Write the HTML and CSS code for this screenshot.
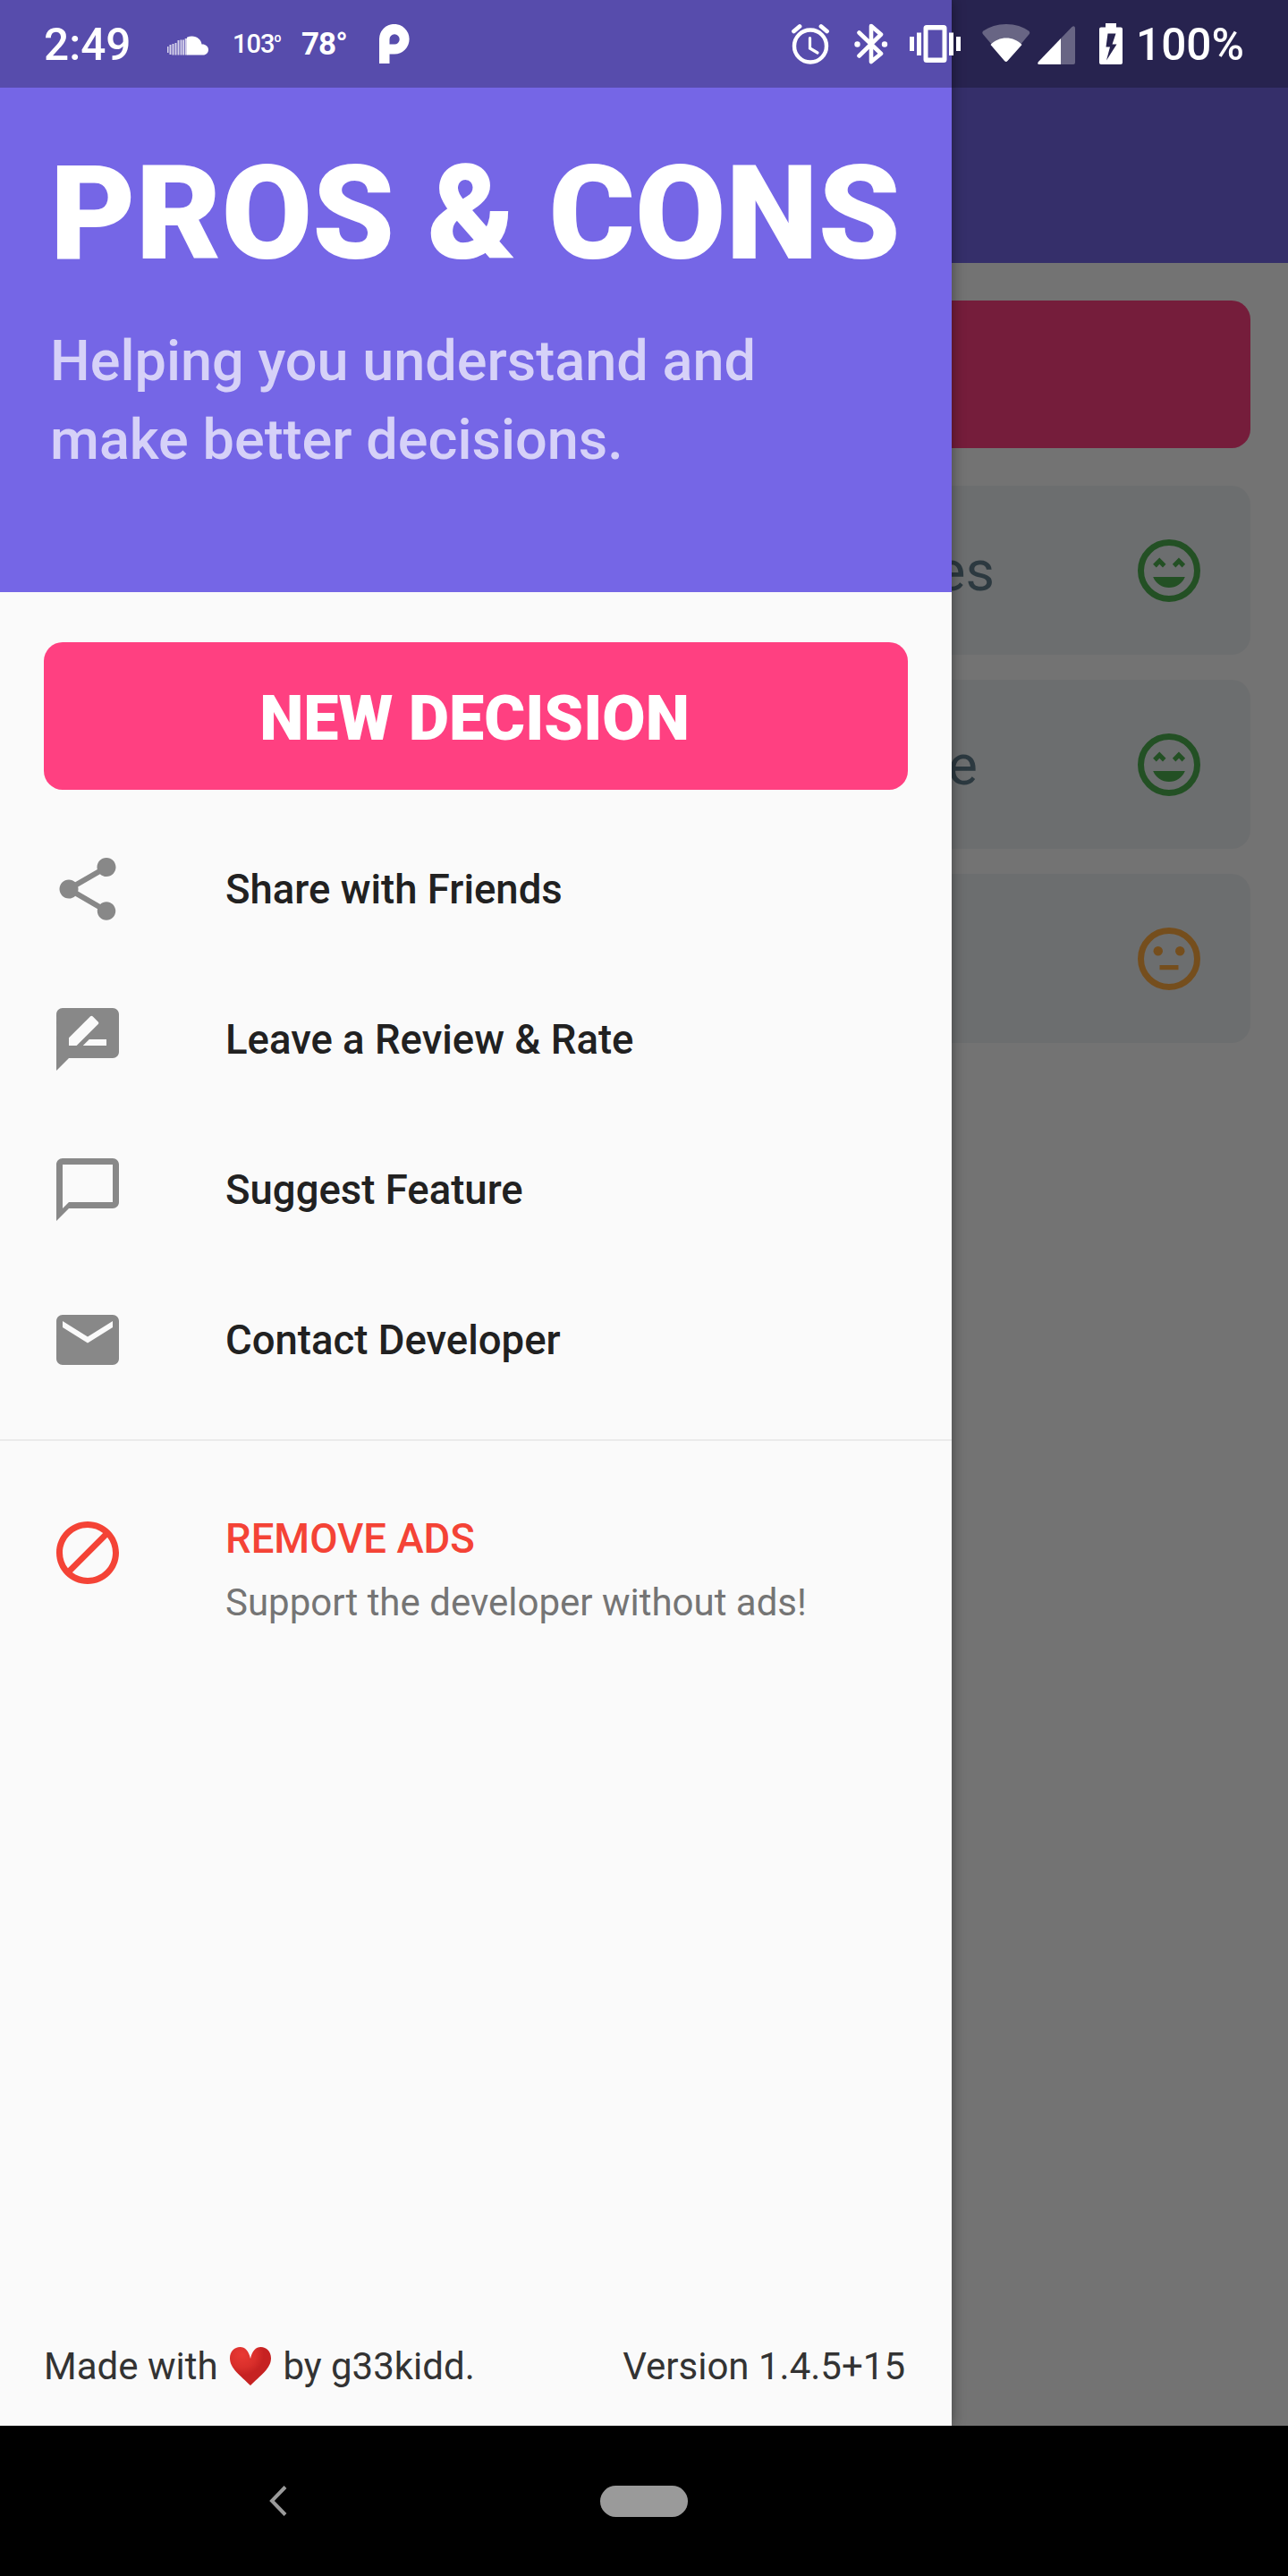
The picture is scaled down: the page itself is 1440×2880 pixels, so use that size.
FILE: index.html
```html
<!DOCTYPE html>
<html lang="en">
<head>
<meta charset="utf-8">
<title>Pros &amp; Cons</title>
<link rel="stylesheet" href="styles.css">
</head>
<body>
<div class="phone">
  <div class="app">
    <main class="screen">
      <div class="app-bar"></div>
      <div class="decisions">
        <div class="screen-button"></div>
        <div class="card"><span class="card-title card-title-long">es</span>
          <svg class="icon good" viewBox="0 0 24 24"><circle cx="12" cy="12" r="9" fill="none" stroke="currentColor" stroke-width="2"/><path d="M6.88 9.94l1.06 1.06L8.94 9.94 10 11l1-1.06L8.94 7.88zM13.1 9.94L14.1 11l1.06-1.06 1 1.06 1.02-1.06-2.06-2.06zM6.9 14a5.5 5.5 0 0 0 10.2 0z"/></svg></div>
        <div class="card"><span class="card-title">e</span>
          <svg class="icon good" viewBox="0 0 24 24"><circle cx="12" cy="12" r="9" fill="none" stroke="currentColor" stroke-width="2"/><path d="M6.88 9.94l1.06 1.06L8.94 9.94 10 11l1-1.06L8.94 7.88zM13.1 9.94L14.1 11l1.06-1.06 1 1.06 1.02-1.06-2.06-2.06zM6.9 14a5.5 5.5 0 0 0 10.2 0z"/></svg></div>
        <div class="card">
          <svg class="icon neutral" viewBox="0 0 24 24"><circle cx="12" cy="12" r="9" fill="none" stroke="currentColor" stroke-width="2"/><path d="M9 14h6v1.5H9z"/><circle cx="8.5" cy="9.5" r="1.5"/><circle cx="15.5" cy="9.5" r="1.5"/></svg></div>
      </div>
    </main>
    <div class="scrim"></div>
    <aside class="drawer">
      <header class="drawer-header">
        <h1 class="title">PROS &amp; CONS</h1>
        <p class="tagline">Helping you understand and<br>make better decisions.</p>
      </header>
      <button class="new-decision">NEW DECISION</button>
      <nav class="menu">
        <a class="item"><svg class="icon" viewBox="0 0 24 24"><path d="M18 16.08c-.76 0-1.44.3-1.96.77L8.91 12.7c.05-.23.09-.46.09-.7s-.04-.47-.09-.7l7.05-4.11c.54.5 1.25.81 2.04.81 1.66 0 3-1.34 3-3s-1.34-3-3-3-3 1.34-3 3c0 .24.04.47.09.7L8.04 9.81C7.5 9.31 6.79 9 6 9c-1.66 0-3 1.34-3 3s1.34 3 3 3c.79 0 1.5-.31 2.04-.81l7.12 4.16c-.05.21-.08.43-.08.65 0 1.61 1.31 2.92 2.92 2.92s2.92-1.31 2.92-2.92-1.31-2.92-2.92-2.92z"/></svg>Share with Friends</a>
        <a class="item"><svg class="icon" viewBox="0 0 24 24"><path d="M20 2H4c-1.1 0-1.99.9-1.99 2L2 22l4-4h14c1.1 0 2-.9 2-2V4c0-1.1-.9-2-2-2zM6 14v-2.47l6.88-6.88c.2-.2.51-.2.71 0l1.77 1.77c.2.2.2.51 0 .71L8.47 14H6zm12 0h-7.5l2-2H18v2z"/></svg>Leave a Review &amp; Rate</a>
        <a class="item"><svg class="icon" viewBox="0 0 24 24"><path d="M20 2H4c-1.1 0-2 .9-2 2v18l4-4h14c1.1 0 2-.9 2-2V4c0-1.1-.9-2-2-2zm0 14H6l-2 2V4h16v12z"/></svg>Suggest Feature</a>
        <a class="item"><svg class="icon" viewBox="0 0 24 24"><path d="M20 4H4c-1.1 0-1.99.9-1.99 2L2 18c0 1.1.9 2 2 2h16c1.1 0 2-.9 2-2V6c0-1.1-.9-2-2-2zm0 4l-8 5-8-5V6l8 5 8-5v2z"/></svg>Contact Developer</a>
      </nav>
      <hr class="divider">
      <a class="remove-ads">
        <svg class="icon" viewBox="0 0 24 24"><path d="M12 2C6.48 2 2 6.48 2 12s4.48 10 10 10 10-4.480 10-10S17.520 2 12 2zM4 12c0-4.420 3.580-8 8-8 1.850 0 3.550.63 4.900 1.690L5.690 16.900C4.630 15.550 4 13.850 4 12zm8 8c-1.850 0-3.550-.63-4.900-1.690L18.310 7.100C19.370 8.450 20 10.150 20 12c0 4.420-3.580 8-8 8z"/></svg>
        <span class="remove-text"><span class="remove-title">REMOVE ADS</span><span class="remove-sub">Support the developer without ads!</span></span>
      </a>
      <footer class="footer">
        <span class="credit">Made with <svg class="heart" viewBox="0 0 46 43"><defs><radialGradient id="hg" cx="0.3" cy="0.2" r="0.75"><stop offset="0" stop-color="#e93a34"/><stop offset="0.45" stop-color="#d92f2b"/><stop offset="0.7" stop-color="#c62222"/></radialGradient></defs><path fill="url(#hg)" d="M23 13C21 4 17 0 11.500 0 5 0 0 5 0 12.500 0 24 12 32 23 43 34 32 46 24 46 12.500 46 5 41 0 34.500 0 29 0 25 4 23 13z"/></svg> by g33kidd.</span>
        <span>Version 1.4.5+15</span>
      </footer>
    </aside>
    <div class="status-bar">
      <span class="clock">2:49</span>
      <svg class="cloud" viewBox="0 0 46 22"><path d="M22 1.800C30 -2 38 3 38.500 9.500 42 9 46 11.500 46 15.500 46 19 43.500 21.500 40 21.500H22z"/><g opacity=".75"><path d="M0 12h1.500v7H0zM2.500 10h2v11h-2zM5.500 9h2v12.500h-2zM8.500 8h2v13.500h-2zM11.500 5h2v16.500h-2zM14.500 4.500h2v17h-2zM17.200 4.500h1.800v17h-1.800zM19.700 3h2.500v18.500h-2.500z"/></g></svg>
      <span class="temp-small">103<span class="deg">o</span></span>
      <span class="temp">78°</span>
      <svg class="p-logo" viewBox="0 0 34 44"><path fill-rule="evenodd" d="M0 44V17A16.800 16.800 0 1 1 17 33.500H11.500V44zM11.500 22.500H17A5.600 5.600 0 1 0 11.500 17z"/></svg>
      <svg class="alarm" viewBox="0 0 44 46"><g fill="none" stroke="currentColor" stroke-linecap="round"><circle cx="21" cy="25.500" r="18" stroke-width="4.400"/><path stroke-width="3.200" d="M20.500 16.500v11.500l8.500 5"/><path stroke-width="4.800" d="M2.500 9l6.500-5.500M39.500 9L33 3.500"/></g></svg>
      <svg class="bluetooth" viewBox="0 0 38 46"><path d="M5.500 10.500L30 34l-11 9V3l11 9.500L5.500 36.500" fill="none" stroke="currentColor" stroke-width="4.600" stroke-linejoin="round" stroke-linecap="round"/><circle cx="3.500" cy="23.500" r="3.200"/><circle cx="34" cy="23.500" r="3.200"/></svg>
      <svg class="vibrate" viewBox="0 0 57 42"><path fill-rule="evenodd" d="M19 0h19a3.500 3.500 0 0 1 3.500 3.500v35A3.500 3.500 0 0 1 38 42H19a3.500 3.500 0 0 1-3.500-3.500v-35A3.500 3.500 0 0 1 19 0zM20.500 5.500v31h16v-31z"/><path d="M0 13h5v16H0zM8 8.500h5v25.500h-5zM44 8.500h5v25.500h-5zM52 13h5v16h-5z"/></svg>
      <svg class="wifi" viewBox="0 0 54 42"><path opacity=".3" d="M27 0C17 0 8 3 1.500 7.500Q-.5 9 .8 11L27 42 52.800 11q1.200-2-.8-3.500C46 3 37 0 27 0z"/><path d="M27 15.500c-6.500 0-13 2.500-17.500 7.500L25 41q1.800 2 3.500 0L44.500 23C40 18 33.500 15.500 27 15.500z"/></svg>
      <svg class="signal" viewBox="0 0 42 43"><path opacity=".3" d="M26 14L38.500 1Q42-1 42 3V41Q42 43 40 43H26z"/><path d="M26 14V43H2Q-1 43 1 40z"/></svg>
      <svg class="battery" viewBox="0 0 26 46"><path fill-rule="evenodd" d="M7 0h12v4.500h5a2 2 0 0 1 2 2V44a2 2 0 0 1-2 2H2a2 2 0 0 1-2-2V6.500a2 2 0 0 1 2-2h5zM9.500 11.500L7.500 26.500h4.500L8 41.500 19.500 23.500H14.500L18.500 11.500z"/></svg>
      <span class="percent">100%</span>
    </div>
  </div>
  <div class="nav-bar">
    <svg class="back" viewBox="0 0 20 34"><path d="M18 1.500L3 17l15 15.500" fill="none" stroke="#9a9a9a" stroke-width="4"/></svg>
    <div class="home"></div>
  </div>
</div>
</body>
</html>
```
FILE: styles.css
```css
* { box-sizing: border-box; margin: 0; padding: 0; }
body { background: #000; font-family: Roboto, sans-serif; }
.phone { width: 1440px; height: 2880px; display: flex; flex-direction: column; overflow: hidden; }
.app { position: relative; height: 2712px; overflow: hidden; background: #fafafa; }
.icon { width: 84px; height: 84px; flex: none; fill: currentColor; }

/* Decision list behind the drawer */
.screen { height: 100%; }
.app-bar { height: 294px; background: #7566e6; }
.decisions { display: flex; flex-direction: column; gap: 28px; padding: 42px; }
.screen-button { height: 164.500px; border-radius: 21px; background: #ff4081; margin-bottom: 14.500px; }
.card { height: 189px; border-radius: 21px; background: #eceff1; display: flex; align-items: center; justify-content: flex-end; padding-right: 49px; }
.card-title { font-size: 63px; color: #607d8b; margin-right: 172px; padding-top: 2px; }
.card-title-long { margin-right: 153px; }
.good { color: #4caf50; }
.neutral { color: #ffab40; }
.scrim { position: absolute; inset: 0; background: rgba(0, 0, 0, .54); }

/* Drawer */
.drawer { position: absolute; top: 0; left: 0; bottom: 0; width: 1064px; background: #fafafa; display: flex; flex-direction: column; box-shadow: 0 0 14px rgba(0, 0, 0, .42); }
.drawer-header { height: 661.500px; padding: 153px 56px 0; background: #7566e6; color: #fff; }
.title { font-size: 147px; line-height: 172px; font-weight: 900; white-space: nowrap; }
.tagline { margin-top: 35px; font-size: 63px; line-height: 88px; font-weight: 500; color: rgba(255, 255, 255, .7); }
.new-decision { margin: 56.500px 49px 0; height: 164.500px; border: 0; border-radius: 21px; background: #ff4081; color: #fff; font: 900 70px Roboto, sans-serif; padding: 6px 3px 0 0; }
.menu { margin-top: 27.500px; color: #212121; }
.item { height: 168px; padding-left: 56px; display: flex; align-items: center; gap: 112px; font-size: 45.500px; font-weight: 500; }
.menu .icon { color: #888; }
.divider { border: 0; height: 2px; background: #ebebeb; margin: 27px 0; }
.remove-ads { display: flex; padding: 56px 0 0 56px; gap: 112px; }
.remove-ads .icon { color: #f44336; }
.remove-text { display: flex; flex-direction: column; }
.remove-title { font-size: 45.500px; line-height: 53px; font-weight: 500; color: #f44336; }
.remove-sub { margin-top: 20px; font-size: 42px; line-height: 49px; color: #757575; }
.footer { margin-top: auto; padding: 0 52px 42px 49px; display: flex; justify-content: space-between; font-size: 42px; line-height: 49px; color: #333; }
.credit { display: flex; align-items: center; gap: 3px; white-space: pre; }
.heart { width: 46px; height: 43px; }

/* System status bar */
.status-bar { position: absolute; top: 0; left: 0; width: 1440px; height: 98px; background: rgba(0, 0, 0, .25); color: #fff; fill: #fff; display: flex; align-items: center; padding-left: 49px; font-weight: 500; }
.clock, .percent { font-size: 49.500px; line-height: 57px; padding-top: 3px; }
.clock { width: 138px; }
.cloud { width: 46px; height: 22px; margin-top: 3px; }
.temp-small { display: flex; width: 77px; margin-left: 27px; font-size: 29px; line-height: 34px; letter-spacing: -1px; white-space: nowrap; }
.deg { font-size: 14px; line-height: 17px; margin-top: 2px; }
.temp { width: 87px; font-size: 35px; font-weight: 700; letter-spacing: -1px; }
.p-logo { width: 34px; height: 44px; }
.alarm { width: 44px; height: 46px; margin-left: 427px; }
.bluetooth { width: 38px; height: 46px; margin-left: 26px; }
.vibrate { width: 57px; height: 42px; margin-left: 24px; }
.wifi { width: 54px; height: 42px; margin: 0 0 2px 24px; }
.signal { width: 42px; height: 43px; margin: 2px 0 0 8px; }
.battery { width: 26px; height: 46px; margin-left: 27px; }
.percent { margin-left: 15px; }

/* System navigation bar */
.nav-bar { height: 168px; background: #000; display: flex; align-items: center; padding-left: 301px; }
.back { width: 20px; height: 34px; }
.home { margin-left: 350px; width: 98px; height: 35px; border-radius: 18px; background: #9a9a9a; }
```
